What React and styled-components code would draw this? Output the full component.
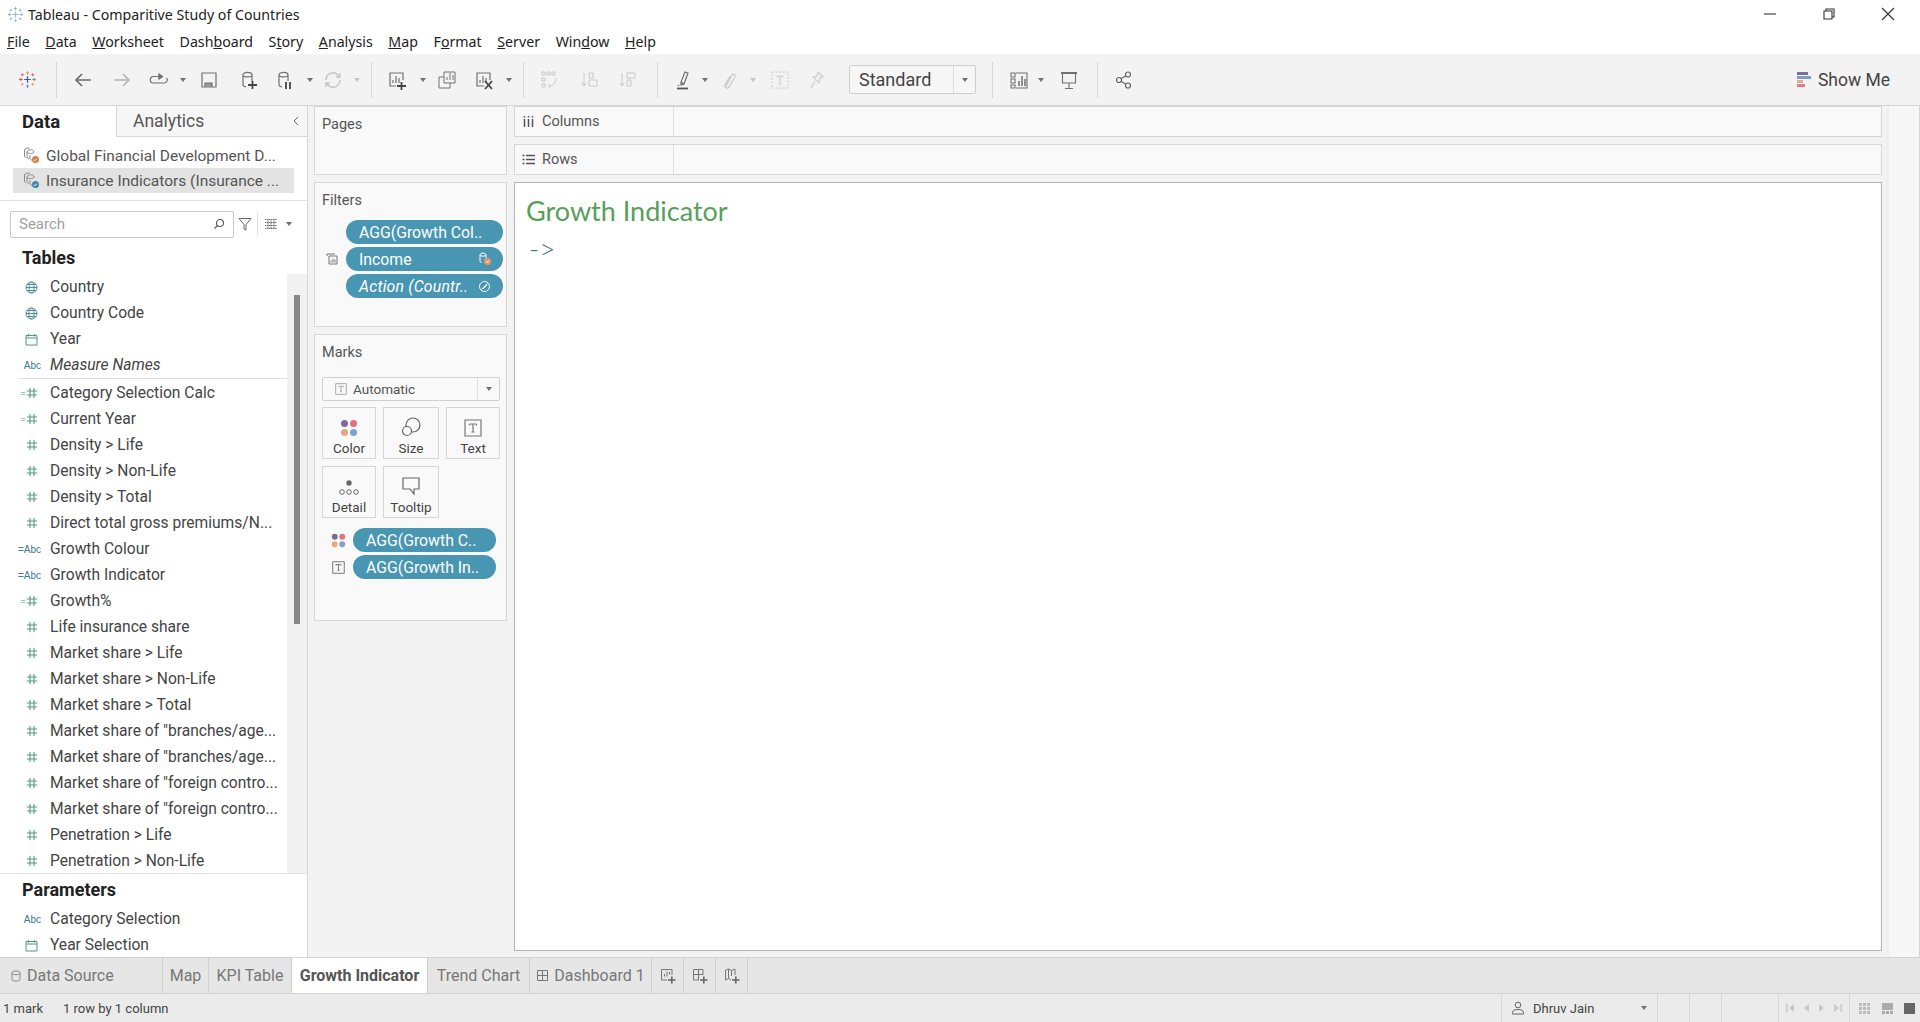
import React from "react";
import styled, { createGlobalStyle } from "styled-components";

const Global = createGlobalStyle`
  html, body { margin: 0; padding: 0; background: #fff; }
  * { box-sizing: border-box; }
`;

const Shell = styled.div`
  width: 1920px;
  height: 1022px;
  display: flex;
  flex-direction: column;
  overflow: hidden;
  font-family: Roboto, "Liberation Sans", sans-serif;
  color: #333;
`;

const TitleBar = styled.div`
  height: 27px;
  flex: none;
  display: flex;
  align-items: center;
  padding: 1px 0 0 7px;
  font-family: "Noto Sans", sans-serif;
  font-size: 14.2px;
  color: #222;
`;
const TitleText = styled.span`
  margin-left: 4px;
`;
const WindowBtns = styled.div`
  margin-left: auto;
  display: flex;
  align-items: center;
  gap: 45px;
  padding-right: 25px;
`;

const MenuBar = styled.div`
  height: 27px;
  flex: none;
  display: flex;
  align-items: center;
  gap: 15.6px;
  padding: 2px 0 0 7px;
  font-family: "Noto Sans", sans-serif;
  font-size: 14.2px;
  color: #222;
`;

const Toolbar = styled.div`
  height: 51px;
  flex: none;
  background: #f3f3f3;
  display: flex;
  align-items: center;
  padding-right: 30px;
`;
const Tool = styled.div`
  width: 20px;
  height: 20px;
  flex: none;
  margin-left: ${(p) => p.$ml}px;
  display: flex;
  align-items: center;
  justify-content: center;
`;
const Caret = styled.div`
  flex: none;
  width: 0;
  height: 0;
  margin-left: ${(p) => p.$ml || 0}px;
  border-left: 3.5px solid transparent;
  border-right: 3.5px solid transparent;
  border-top: 4px solid ${(p) => (p.$off ? "#c4c4c4" : "#707070")};
`;
const ToolSep = styled.div`
  flex: none;
  width: 1px;
  height: 36px;
  margin-left: ${(p) => p.$ml}px;
  background: #d8d8d8;
`;
const StandardBox = styled.div`
  flex: none;
  width: 127px;
  height: 29px;
  margin-left: ${(p) => p.$ml}px;
  display: flex;
  align-items: center;
  border: 1px solid #cfcfcf;
  border-radius: 2px;
  background: #f6f6f6;
  font-size: 18px;
  color: #444;
`;
const StandardText = styled.span`
  flex: 1;
  padding-left: 9px;
`;
const StandardArrow = styled.div`
  width: 22px;
  height: 100%;
  border-left: 1px solid #dcdcdc;
  display: flex;
  align-items: center;
  justify-content: center;
`;
const ShowMe = styled.div`
  margin-left: auto;
  display: flex;
  align-items: center;
  gap: 6px;
  font-size: 17.5px;
  color: #444;
`;

const Main = styled.div`
  flex: 1;
  min-height: 0;
  display: flex;
  background: #f3f3f3;
  border-top: 1px solid #d6d6d6;
`;

const DataPane = styled.div`
  width: 308px;
  flex: none;
  background: #fff;
  border-right: 1px solid #d6d6d6;
  display: flex;
  flex-direction: column;
  overflow: hidden;
`;
const PaneTabs = styled.div`
  height: 31px;
  flex: none;
  display: flex;
`;
const PaneTab = styled.div`
  width: ${(p) => (p.$active ? "116px" : "auto")};
  flex: ${(p) => (p.$active ? "none" : "1")};
  display: flex;
  align-items: center;
  justify-content: space-between;
  padding: 0 6px 0 ${(p) => (p.$active ? "22px" : "16px")};
  font-size: ${(p) => (p.$active ? "18.5px" : "17.5px")};
  font-weight: ${(p) => (p.$active ? 700 : 400)};
  color: ${(p) => (p.$active ? "#222" : "#555")};
  background: ${(p) => (p.$active ? "#fff" : "#f6f6f6")};
  border-left: ${(p) => (p.$active ? "none" : "1px solid #d6d6d6")};
  border-bottom: ${(p) => (p.$active ? "none" : "1px solid #d6d6d6")};
`;
const Sources = styled.div`
  flex: none;
  padding: 6px 13px 7px;
  border-bottom: 1px solid #e2e2e2;
`;
const SourceItem = styled.div`
  height: 25px;
  display: flex;
  align-items: center;
  gap: 6px;
  padding-left: 10px;
  font-size: 15.5px;
  color: #555;
  background: ${(p) => (p.$selected ? "#e3e3e3" : "transparent")};
`;
const SearchRow = styled.div`
  flex: none;
  display: flex;
  align-items: center;
  height: 26px;
  margin: 10px 0 0 10px;
`;
const SearchBox = styled.div`
  width: 224px;
  height: 27px;
  display: flex;
  align-items: center;
  justify-content: space-between;
  padding: 0 8px;
  border: 1px solid #c8c8c8;
  border-radius: 2px;
  font-size: 15px;
  color: #a0a0a0;
`;
const SearchTools = styled.div`
  display: flex;
  align-items: center;
  gap: 5px;
  margin-left: 4px;
`;
const SearchDivider = styled.div`
  width: 1px;
  height: 22px;
  background: #dcdcdc;
  margin-right: 1px;
`;
const SectionHead = styled.div`
  height: ${(p) => p.$h}px;
  flex: none;
  display: flex;
  align-items: flex-end;
  padding: 0 0 ${(p) => p.$pb}px 22px;
  font-size: 18px;
  font-weight: 700;
  color: #222;
`;
const FieldsArea = styled.div`
  height: 600px;
  flex: none;
  display: flex;
  border-bottom: 1px solid #e2e2e2;
`;
const FieldCol = styled.div`
  flex: 1;
  min-width: 0;
  overflow: hidden;
`;
const Divider = styled.div`
  height: 1px;
  margin: 0 0 1px 18px;
  background: #e0e0e0;
`;
const ScrollTrack = styled.div`
  width: 20px;
  flex: none;
  background: #f1f1f1;
  padding: 21px 0 0 7px;
`;
const ScrollThumb = styled.div`
  width: 6px;
  height: 329px;
  background: #888;
`;
const FieldRow = styled.div`
  height: 26px;
  flex: none;
  display: flex;
  align-items: center;
  font-size: 15.6px;
  font-style: ${(p) => (p.$italic ? "italic" : "normal")};
  color: #444;
  white-space: nowrap;
`;
const FieldIcon = styled.div`
  width: 50px;
  flex: none;
  padding-right: ${(p) => (p.$abc ? 9 : 12)}px;
  display: flex;
  align-items: center;
  justify-content: flex-end;
`;
const AbcMark = styled.span`
  font-family: "Liberation Sans", sans-serif;
  font-size: 10px;
  font-style: normal;
  color: #3f7a90;
`;
const CalcMark = styled.span`
  font-family: "Liberation Sans", sans-serif;
  font-size: 9px;
  color: #4f9a85;
  margin-right: 0.5px;
`;

const MiddleCol = styled.div`
  width: 193px;
  flex: none;
  margin-left: 6px;
  display: flex;
  flex-direction: column;
  gap: 7px;
`;
const Card = styled.div`
  height: ${(p) => p.$h}px;
  flex: none;
  background: #f9f9f9;
  border: 1px solid #d6d6d6;
  padding: 8px 7px 0;
`;
const CardTitle = styled.div`
  height: 20px;
  line-height: 20px;
  margin-bottom: ${(p) => p.$mb || 0}px;
  font-size: 14.5px;
  color: #555;
`;
const PillRow = styled.div`
  display: flex;
  align-items: center;
  margin: 0 0 3px -7px;
`;
const PillSlot = styled.div`
  width: ${(p) => p.$w}px;
  flex: none;
  display: flex;
  justify-content: center;
  padding-left: ${(p) => p.$pl || 0}px;
`;
const Pill = styled.div`
  width: ${(p) => p.$w}px;
  height: 24px;
  flex: none;
  border-radius: 12px;
  background: #4996b2;
  color: #fff;
  display: flex;
  align-items: center;
  justify-content: space-between;
  padding: 0 ${(p) => p.$pr || 8}px 0 13px;
  font-size: 15.8px;
  font-style: ${(p) => (p.$italic ? "italic" : "normal")};
  letter-spacing: ${(p) => (p.$italic ? "0.2px" : "0")};
  white-space: nowrap;
  overflow: hidden;
`;
const MarkSelect = styled.div`
  width: 178px;
  height: 24px;
  display: flex;
  align-items: center;
  border: 1px solid #d0d0d0;
  border-radius: 2px;
  font-size: 13.5px;
  color: #555;
`;
const MarkSelectLabel = styled.div`
  flex: 1;
  display: flex;
  align-items: center;
  gap: 6px;
  padding-left: 12px;
`;
const MarkSelectArrow = styled.div`
  width: 22px;
  height: 100%;
  border-left: 1px solid #e0e0e0;
  display: flex;
  align-items: center;
  justify-content: center;
`;
const MarkGrid = styled.div`
  display: grid;
  grid-template-columns: 54px 56px 54px;
  grid-auto-rows: 52px;
  gap: 7px;
  margin: 6px 0 10px;
`;
const MarkBtn = styled.div`
  border: 1px solid #d6d6d6;
  display: flex;
  flex-direction: column;
  align-items: center;
  justify-content: flex-end;
  gap: 3px;
  padding-bottom: 2px;
  font-size: 13.5px;
  color: #444;
`;

const ViewCol = styled.div`
  width: 1368px;
  flex: none;
  margin-left: 7px;
  display: flex;
  flex-direction: column;
  gap: 7px;
  padding-bottom: 6px;
`;
const Shelf = styled.div`
  height: 31px;
  flex: none;
  display: flex;
  background: #f9f9f9;
  border: 1px solid #d6d6d6;
`;
const ShelfLabel = styled.div`
  width: 159px;
  display: flex;
  align-items: center;
  gap: 7px;
  padding-left: 7px;
  border-right: 1px solid #dedede;
  font-size: 14.5px;
  color: #555;
`;
const ViewCard = styled.div`
  flex: 1;
  background: #fff;
  border: 1px solid #b4b4b4;
  padding: 12px 11px;
`;
const ViewTitle = styled.div`
  font-family: Lato, sans-serif;
  font-size: 27px;
  line-height: 32px;
  color: #57a05a;
`;
const ViewArrow = styled.div`
  font-family: Lato, sans-serif;
  font-size: 28px;
  font-weight: 300;
  line-height: 30px;
  margin-top: 6px;
  padding-left: 3px;
  color: #4a6f8f;
`;
const RightStrip = styled.div`
  flex: 1;
  margin-left: 7px;
  background: #f7f7f7;
  border-right: 1px solid #d6d6d6;
  box-shadow: -2px 0 3px rgba(0, 0, 0, 0.03);
`;

const TabBar = styled.div`
  height: 37px;
  flex: none;
  display: flex;
  background: #e6e6e6;
  border-top: 1px solid #d2d2d2;
  border-bottom: 1px solid #d2d2d2;
`;
const SheetTab = styled.div`
  width: ${(p) => p.$w}px;
  flex: none;
  display: flex;
  align-items: center;
  justify-content: ${(p) => (p.$left ? "flex-start" : "center")};
  gap: 5px;
  padding-left: ${(p) => (p.$left ? 10 : 0)}px;
  font-size: 16px;
  font-weight: ${(p) => (p.$active ? 700 : 400)};
  color: ${(p) => (p.$active ? "#555" : "#777")};
  background: ${(p) => (p.$active ? "#fff" : "transparent")};
  border-right: 1px solid #cecece;
  white-space: nowrap;
`;
const StatusBar = styled.div`
  height: 28px;
  flex: none;
  display: flex;
  align-items: center;
  background: #ebebeb;
  font-size: 13px;
  color: #444;
`;
const StatusText = styled.span`
  margin-left: ${(p) => p.$ml}px;
`;
const UserCell = styled.div`
  margin-left: auto;
  width: 157px;
  height: 100%;
  display: flex;
  align-items: center;
  gap: 8px;
  padding: 0 10px 0 9px;
  border-left: 1px solid #d6d6d6;
  border-right: 1px solid #d6d6d6;
`;
const EmptyCell = styled.div`
  width: ${(p) => p.$w}px;
  height: 100%;
  flex: none;
  display: flex;
  align-items: center;
  justify-content: ${(p) => p.$justify || "flex-start"};
  gap: ${(p) => p.$gap || 0}px;
  padding: 0 ${(p) => p.$pr || 0}px 0 ${(p) => p.$pl || 0}px;
  border-right: ${(p) => (p.$noBorder ? "none" : "1px solid #d6d6d6")};
`;
const UserName = styled.span`
  flex: 1;
`;

// ---- drawings

const Svg = ({ s = 20, vb = 20, c = "#707070", w = 1.2, children }) => (
  <svg width={s} height={s} viewBox={`0 0 ${vb} ${vb}`} fill="none" stroke={c} strokeWidth={w}>
    {children}
  </svg>
);

const Logo = ({ s = 20, pale }) => {
  const col = pale
    ? ["#7fa8c9", "#7fa8c9", "#9dbcd6", "#9dbcd6", "#8fb0cc"]
    : ["#e8964d", "#c9525f", "#6b97ab", "#3f5f8e", "#69979b"];
  return (
    <svg width={s} height={s} viewBox="0 0 20 20" fill="none" strokeWidth="1">
      <path d="M10 6.500v7M6.500 10h7" stroke={col[3]} strokeWidth="1.300" />
      <path d="M10 1v4M8.300 3h3.400" stroke={col[0]} />
      <path d="M10 15v4M8.300 17h3.400" stroke={col[2]} />
      <path d="M1 10h4M3 8.300v3.400" stroke={col[1]} />
      <path d="M15 10h4M17 8.300v3.400" stroke={col[4]} />
      <path d="M4.500 3.500v3M3 5h3M15.500 3.500v3M14 5h3" stroke={col[1]} strokeWidth=".9" />
      <path d="M4.500 13.500v3M3 15h3M15.500 13.500v3M14 15h3" stroke={col[0]} strokeWidth=".9" />
    </svg>
  );
};
const Back = () => (
  <Svg c="#6a6a6a" w={1.6}>
    <path d="M18 10H3M9 4l-6 6 6 6" />
  </Svg>
);
const Forward = () => (
  <Svg c="#b4b4b4" w={1.6}>
    <path d="M2 10h15M11 4l6 6-6 6" />
  </Svg>
);
const Redo = () => (
  <Svg>
    <path d="M10 6.500H4.500a3 3 0 0 0 0 6.500h11a3 3 0 0 0 2-5" />
    <path d="M10 4l3.500 2.500L10 9z" fill="#707070" />
  </Svg>
);
const Save = () => (
  <Svg>
    <path d="M3 3h14v14H3z" />
    <path d="M6 17v-4h7v4" fill="#999" />
  </Svg>
);
const Cyl = ({ badge }) => (
  <Svg>
    <path d="M5 5c0-3.500 9-3.500 9 0v6M5 5c0 2.500 9 2.500 9 0M5 5v10c0 1 1 1.500 3 1.800" />
    {badge === "plus" && <path d="M10 15h9M14.500 11v8" stroke="#444" strokeWidth="1.800" />}
    {badge === "pause" && <path d="M12 12v7M16 12v7" stroke="#444" strokeWidth="1.800" />}
  </Svg>
);
const Refresh = () => (
  <Svg c="#c4c4c4" w={1.4}>
    <path d="M3 10a7 7 0 0 1 12-5l2 2M17 10a7 7 0 0 1-12 5l-2-2" />
    <path d="M17 3v4h-4M3 17v-4h4" />
  </Svg>
);
const Bars = ({ x = 6, y = 5, c = "#707070" }) => (
  <path d={`M${x} ${y + 8}v-3M${x + 3} ${y + 8}v-7M${x + 6} ${y + 8}v-5`} stroke={c} />
);
const NewSheet = () => (
  <Svg>
    <path d="M9 16H3V3h13v7" />
    <Bars x={6} y={5} />
    <path d="M10 16h9M14.500 12v8" stroke="#444" strokeWidth="1.800" />
  </Svg>
);
const Duplicate = () => (
  <Svg w={1}>
    <path d="M7 2h11v11H7zM7 7H2v11h11v-5" />
    <Bars x={10} y={2} />
  </Svg>
);
const ClearSheet = () => (
  <Svg>
    <path d="M10 16H3V3h13v7" />
    <Bars x={6} y={5} />
    <path d="M11 11l7 8M18 11l-7 8" stroke="#444" strokeWidth="1.800" />
  </Svg>
);
const Swap = () => (
  <Svg c="#c8c8c8" w={1}>
    <path d="M3 2h3v3H3zM8 2h3v3H8zM13 2h3v3h-3zM3 8h3v3H3zM3 14h3v3H3z" />
    <path d="M17 8c0 4-2 7-6 8M9 14l2 2-1 2" />
  </Svg>
);
const SortA = () => (
  <Svg c="#c8c8c8" w={1}>
    <path d="M4 3v13M2 13l2 3 2-3M9 3h4v5H9zM9 10h8v6H9z" />
  </Svg>
);
const SortB = () => (
  <Svg c="#c8c8c8" w={1}>
    <path d="M4 3v13M2 13l2 3 2-3M9 3h8v5H9zM9 10h4v6H9z" />
  </Svg>
);
const Highlight = () => (
  <Svg c="#666" w={1.1}>
    <path d="M11 2l3 1-4 11-3 1 0-3zM7 12l3 2" />
    <path d="M3 18.500h11" stroke="#555" strokeWidth="1.800" />
    <path d="M4 16l1-1" />
  </Svg>
);
const Clip = () => (
  <Svg c="#c8c8c8" w={1.2}>
    <path d="M7 16l6-11c1-2 4 0 3 2l-6 10c-1 2-5 1-4-2l5-9" />
  </Svg>
);
const DashedT = () => (
  <Svg c="#c8c8c8" w={1}>
    <path d="M2 2h16v16H2z" strokeDasharray="2 1.500" />
    <path d="M7 6h6M10 6v8M8.500 14h3M7 6v1.500M13 6v1.500" />
  </Svg>
);
const Pin = () => (
  <Svg c="#c8c8c8" w={1.1}>
    <path d="M11 2l5 5-3 1-1 5-6-6 4-1zM8 11l-4 7" />
  </Svg>
);
const ChartType = () => (
  <Svg w={1.1}>
    <path d="M2 3h4v4H2zM2 9h4v4H2zM2 15h4v3H2zM7 3h11v15H7" />
    <path d="M10 16v-5M13 16V6M16 16V9" strokeWidth="1.500" />
  </Svg>
);
const Present = () => (
  <Svg w={1.1}>
    <path d="M2 3h16" strokeWidth="2" />
    <path d="M3.500 3v10h13V3M10 13v5M6 18.500h8" />
  </Svg>
);
const Share = () => (
  <Svg c="#666" w={1.2}>
    <circle cx="14" cy="4.500" r="2.500" />
    <circle cx="5" cy="10" r="2.500" />
    <circle cx="14" cy="15.500" r="2.500" />
    <path d="M7 8.800l5-3M7 11.200l5 3" />
  </Svg>
);
const ShowMeIcon = () => (
  <svg width="15" height="16" viewBox="0 0 15 16">
    <rect y="0" width="11" height="3" fill="#7b6f95" />
    <rect y="4" width="14" height="3" fill="#7a9cc6" />
    <rect y="8" width="6" height="3" fill="#e8a98e" />
    <rect y="12" width="8" height="3" fill="#dc7f86" />
  </svg>
);
const SourceIcon = ({ dot }) => (
  <svg width="17" height="17" viewBox="0 0 17 17" fill="none" stroke="#8a8a8a" strokeWidth="1">
    <path d="M4 5c0-3 7-3 7 0M4 5v5c0 1 1 1.500 2 1.700M4 5c0 2 7 2 7 0" />
    <path d="M1.500 3v6c0 1 .6 1.500 1.500 1.700M1.500 3c0-1.500 3-2.200 5-1.800" />
    <path d="M7 8v3.500c0 1 1 1.500 2 1.700" />
    <circle cx="12.500" cy="12.500" r="3.500" fill={dot} stroke="none" />
    <path d="M10.800 12.500l1.200 1.200 2-2" stroke="#fff" />
  </svg>
);
const Globe = () => (
  <Svg s={13} vb={13} c="#4f8c9c" w={1}>
    <circle cx="6.500" cy="6.500" r="5.500" />
    <ellipse cx="6.500" cy="6.500" rx="2.600" ry="5.500" />
    <path d="M1 6.500h11M2 3.500h9M2 9.500h9" />
  </Svg>
);
const Calendar = () => (
  <Svg s={13} vb={13} c="#4f9a85" w={1}>
    <path d="M1 2.500h11v9.500H1zM1 5h11M3.500 1v2.500M9.500 1v2.500" />
  </Svg>
);
const Hash = () => (
  <Svg s={12} vb={12} c="#4f9a85" w={1.1}>
    <path d="M4 1v10M8 1v10M1 4h10M1 8h10" />
  </Svg>
);
const Funnel = () => (
  <Svg s={14} vb={14} c="#666" w={1}>
    <path d="M1 1.500h12L8 7.500V13l-2-1V7.500z" />
  </Svg>
);
const ListIcon = () => (
  <Svg s={14} vb={14} c="#777" w={1}>
    <path d="M1 2.500h12M1 5.500h12M1 8.500h12M1 11.500h12M4 2v10M7 2v10M10 2v10" strokeDasharray="1.500 .5" />
  </Svg>
);
const Magnifier = () => (
  <Svg s={12} vb={12} c="#555" w={1.1}>
    <circle cx="7" cy="5" r="3.500" />
    <path d="M4.500 7.500L1.500 10.500" />
  </Svg>
);
const ColorDots = ({ s = 18 }) => (
  <svg width={s} height={s} viewBox="0 0 18 18">
    <circle cx="4.500" cy="4.500" r="3.500" fill="#7b6a9c" />
    <circle cx="13.500" cy="4.500" r="3.500" fill="#e4707f" />
    <circle cx="4.500" cy="13.500" r="3.500" fill="#e8a680" />
    <circle cx="13.500" cy="13.500" r="3.500" fill="#80a3cc" />
  </svg>
);
const TBox = ({ s = 18, c = "#777" }) => (
  <Svg s={s} vb={18} c={c} w={1.2}>
    <path d="M1 1h16v16H1z" />
    <path d="M5.500 5h7M9 5v8M7.500 13h3M5.500 5v1.500M12.500 5v1.500" />
  </Svg>
);
const SizeIcon = () => (
  <Svg s={20} vb={20} c="#666" w={1.2}>
    <circle cx="12" cy="8" r="7" />
    <circle cx="6" cy="14" r="4.500" fill="#f9f9f9" />
  </Svg>
);
const DetailIcon = () => (
  <svg width="20" height="16" viewBox="0 0 20 16" fill="none" stroke="#666">
    <circle cx="10" cy="3" r="2.700" fill="#666" stroke="none" />
    <circle cx="3" cy="12" r="2.300" />
    <circle cx="10" cy="12" r="2.300" />
    <circle cx="17" cy="12" r="2.300" />
  </svg>
);
const TooltipIcon = () => (
  <Svg s={20} vb={20} c="#666" w={1.2}>
    <path d="M2 2h16v11h-5v5l-4-5H2z" />
  </Svg>
);
const ColumnsIcon = () => (
  <Svg s={13} vb={13} c="#555" w={1.5}>
    <path d="M2.500 4v8M6.500 4v8M10.500 4v8M2.500 1v1.500M6.500 1v1.500M10.500 1v1.500" />
  </Svg>
);
const RowsIcon = () => (
  <Svg s={13} vb={13} c="#555" w={1.4}>
    <path d="M4 2.500h9M4 6.500h9M4 10.500h9M.5 2.500h2M.5 6.500h2M.5 10.500h2" />
  </Svg>
);
const SetIcon = () => (
  <Svg s={12} vb={12} c="#777" w={1}>
    <path d="M1 3V1h8M3 3h8v8H3zM5 9.500v-2M7 9.500v-4M9 9.500v-3" />
  </Svg>
);
const IncomeBadge = () => (
  <svg width="14" height="14" viewBox="0 0 14 14" fill="none" stroke="#fff" strokeWidth="1">
    <path d="M2 3c0-2.500 6-2.500 6 0v4M2 3c0 1.500 6 1.500 6 0M2 3v6c0 1 1 1.500 2 1.500" />
    <circle cx="9.500" cy="9.500" r="3.500" fill="#e8965f" stroke="none" />
    <path d="M8 9.500l1 1 2-2" />
  </svg>
);
const LinkBadge = () => (
  <Svg s={13} vb={13} c="#fff" w={1}>
    <circle cx="6.500" cy="6.500" r="5" />
    <path d="M3.500 9.500l6-6M5 9l4-4" />
  </Svg>
);
const DbSmall = () => (
  <Svg s={12} vb={12} c="#888" w={1}>
    <path d="M2 2.500c0-2 8-2 8 0v7c0 2-8 2-8 0zM2 3.500c0 1.500 8 1.500 8 0" />
  </Svg>
);
const Grid2 = () => (
  <Svg s={13} vb={13} c="#777" w={1}>
    <path d="M1.500 1.500h10v10h-10zM6.500 1.500v10M1.500 6.500h10" />
  </Svg>
);
const AddTab = ({ kind }) => (
  <Svg s={16} vb={16} c="#777" w={1}>
    {kind === "sheet" && <path d="M7 12H1.500V1.500H12V7M4.500 8.500V6M7 8.500v-5M9.500 6.500V4" />}
    {kind === "dash" && <path d="M7 12H1.500V1.500H11V7M6.500 1.500V12M1.500 6.500H11" />}
    {kind === "story" && <path d="M7 12l-2.500-1.500L1.500 12V2l3-1 3 1.500L11 1v6M4.500 1v9.500M7.500 2.500V8" />}
    <path d="M8 12h7.500M11.800 8.500v7" stroke="#666" strokeWidth="1.600" />
  </Svg>
);
const UserIcon = () => (
  <Svg s={14} vb={14} c="#666" w={1}>
    <circle cx="7" cy="4" r="2.800" />
    <path d="M1.500 13v-1.500c0-2 2-3 5.500-3s5.500 1 5.500 3V13z" />
  </Svg>
);
const Pager = ({ d }) => (
  <svg width="10" height="10" viewBox="0 0 10 10" fill="#c8c8c8">
    <path d={d} />
  </svg>
);
const ViewDots = ({ level }) => {
  if (level === 3) return <svg width="11" height="11" viewBox="0 0 11 11"><rect width="11" height="11" fill="#666" /></svg>;
  if (level === 2) {
    return (
      <svg width="11" height="11" viewBox="0 0 11 11" fill="#aaa">
        <rect width="11" height="7" />
        <path d="M0 8h3v3H0zM4 8h3v3H4zM8 8h3v3H8z" />
      </svg>
    );
  }
  return (
    <svg width="11" height="11" viewBox="0 0 11 11" fill="#bbb">
      {[0, 4, 8].flatMap((y) => [0, 4, 8].map((x) => <rect key={x + "-" + y} x={x} y={y} width="3" height="3" />))}
    </svg>
  );
};

// ---- data

const menus = [
  ["F", "ile"], ["D", "ata"], ["W", "orksheet"], ["Dash", "b", "oard"], ["S", "t", "ory"], ["A", "nalysis"],
  ["M", "ap"], ["F", "o", "rmat"], ["S", "erver"], ["Win", "d", "ow"], ["H", "elp"],
];

const topFields = [
  { name: "Country", type: "globe" },
  { name: "Country Code", type: "globe" },
  { name: "Year", type: "date" },
  { name: "Measure Names", type: "abc", italic: true },
];
const measures = [
  { name: "Category Selection Calc", type: "calc" },
  { name: "Current Year", type: "calc" },
  { name: "Density > Life", type: "num" },
  { name: "Density > Non-Life", type: "num" },
  { name: "Density > Total", type: "num" },
  { name: "Direct total gross premiums/N...", type: "num" },
  { name: "Growth Colour", type: "calcAbc" },
  { name: "Growth Indicator", type: "calcAbc" },
  { name: "Growth%", type: "calc" },
  { name: "Life insurance share", type: "num" },
  { name: "Market share > Life", type: "num" },
  { name: "Market share > Non-Life", type: "num" },
  { name: "Market share > Total", type: "num" },
  { name: 'Market share of "branches/age...', type: "num" },
  { name: 'Market share of "branches/age...', type: "num" },
  { name: 'Market share of "foreign contro...', type: "num" },
  { name: 'Market share of "foreign contro...', type: "num" },
  { name: "Penetration > Life", type: "num" },
  { name: "Penetration > Non-Life", type: "num" },
];

const Field = ({ name, type, italic }) => (
  <FieldRow $italic={italic}>
    <FieldIcon $abc={type === "abc" || type === "calcAbc"}>
      {type === "globe" && <Globe />}
      {type === "date" && <Calendar />}
      {type === "abc" && <AbcMark>Abc</AbcMark>}
      {type === "calcAbc" && <AbcMark>=Abc</AbcMark>}
      {type === "calc" && <CalcMark>=</CalcMark>}
      {(type === "num" || type === "calc") && <Hash />}
    </FieldIcon>
    {name}
  </FieldRow>
);

export default function App() {
  return (
    <Shell>
      <Global />
      <TitleBar>
        <Logo s={17} pale />
        <TitleText>Tableau - Comparitive Study of Countries</TitleText>
        <WindowBtns>
          <Svg s={14} vb={14} c="#333" w={1.1}><path d="M1 7h12" /></Svg>
          <Svg s={14} vb={14} c="#333" w={1.1}><path d="M2 4h8v8H2zM4 4V2h8v8h-2" /></Svg>
          <Svg s={14} vb={14} c="#333" w={1.1}><path d="M1 1l12 12M13 1L1 13" /></Svg>
        </WindowBtns>
      </TitleBar>

      <MenuBar>
        {menus.map((m, i) => (
          <span key={i}>
            {m.length === 2 ? <><u>{m[0]}</u>{m[1]}</> : <>{m[0]}<u>{m[1]}</u>{m[2]}</>}
          </span>
        ))}
      </MenuBar>

      <Toolbar>
        <Tool $ml={17}><Logo s={19} /></Tool>
        <ToolSep $ml={19} />
        <Tool $ml={16}><Back /></Tool>
        <Tool $ml={19}><Forward /></Tool>
        <Tool $ml={17}><Redo /></Tool>
        <Caret $ml={11} />
        <Tool $ml={13}><Save /></Tool>
        <Tool $ml={19}><Cyl badge="plus" /></Tool>
        <Tool $ml={16}><Cyl badge="pause" /></Tool>
        <Caret $ml={13} />
        <Tool $ml={10}><Refresh /></Tool>
        <Caret $ml={11} $off />
        <ToolSep $ml={11} />
        <Tool $ml={15}><NewSheet /></Tool>
        <Caret $ml={13} />
        <Tool $ml={11}><Duplicate /></Tool>
        <Tool $ml={17}><ClearSheet /></Tool>
        <Caret $ml={12} />
        <ToolSep $ml={11} />
        <Tool $ml={15}><Swap /></Tool>
        <Tool $ml={21}><SortA /></Tool>
        <Tool $ml={18}><SortB /></Tool>
        <ToolSep $ml={19} />
        <Tool $ml={16}><Highlight /></Tool>
        <Caret $ml={8} />
        <Tool $ml={11}><Clip /></Tool>
        <Caret $ml={11} $off />
        <Tool $ml={14}><DashedT /></Tool>
        <Tool $ml={17}><Pin /></Tool>
        <StandardBox $ml={22}>
          <StandardText>Standard</StandardText>
          <StandardArrow><Caret /></StandardArrow>
        </StandardBox>
        <ToolSep $ml={16} />
        <Tool $ml={16}><ChartType /></Tool>
        <Caret $ml={9} />
        <Tool $ml={15}><Present /></Tool>
        <ToolSep $ml={18} />
        <Tool $ml={16}><Share /></Tool>
        <ShowMe>
          <ShowMeIcon />
          Show Me
        </ShowMe>
      </Toolbar>

      <Main>
        <DataPane>
          <PaneTabs>
            <PaneTab $active>Data</PaneTab>
            <PaneTab>
              Analytics
              <Svg s={10} vb={10} c="#666" w={1}><path d="M7 1L3 5l4 4" /></Svg>
            </PaneTab>
          </PaneTabs>
          <Sources>
            <SourceItem><SourceIcon dot="#d9794a" />Global Financial Development D...</SourceItem>
            <SourceItem $selected><SourceIcon dot="#3f87a8" />Insurance Indicators (Insurance ...</SourceItem>
          </Sources>
          <SearchRow>
            <SearchBox>Search<Magnifier /></SearchBox>
            <SearchTools>
              <Funnel />
              <SearchDivider />
              <ListIcon />
              <Caret $ml={3} />
            </SearchTools>
          </SearchRow>
          <SectionHead $h={37} $pb={6}>Tables</SectionHead>
          <FieldsArea>
            <FieldCol>
              {topFields.map((f) => <Field key={f.name} {...f} />)}
              <Divider />
              {measures.map((f, i) => <Field key={i} {...f} />)}
            </FieldCol>
            <ScrollTrack><ScrollThumb /></ScrollTrack>
          </FieldsArea>
          <SectionHead $h={32} $pb={6}>Parameters</SectionHead>
          <Field name="Category Selection" type="abc" />
          <Field name="Year Selection" type="date" />
        </DataPane>

        <MiddleCol>
          <Card $h={69}>
            <CardTitle>Pages</CardTitle>
          </Card>
          <Card $h={145}>
            <CardTitle $mb={9}>Filters</CardTitle>
            <PillRow><PillSlot $w={31} /><Pill $w={157}>AGG(Growth Col..</Pill></PillRow>
            <PillRow>
              <PillSlot $w={31} $pl={2}><SetIcon /></PillSlot>
              <Pill $w={157} $pr={11}>Income<IncomeBadge /></Pill>
            </PillRow>
            <PillRow>
              <PillSlot $w={31} />
              <Pill $w={157} $pr={12} $italic>Action (Countr..<LinkBadge /></Pill>
            </PillRow>
          </Card>
          <Card $h={287}>
            <CardTitle $mb={14}>Marks</CardTitle>
            <MarkSelect>
              <MarkSelectLabel><TBox s={12} c="#999" />Automatic</MarkSelectLabel>
              <MarkSelectArrow><Caret /></MarkSelectArrow>
            </MarkSelect>
            <MarkGrid>
              <MarkBtn><ColorDots />Color</MarkBtn>
              <MarkBtn><SizeIcon />Size</MarkBtn>
              <MarkBtn><TBox />Text</MarkBtn>
              <MarkBtn><DetailIcon />Detail</MarkBtn>
              <MarkBtn><TooltipIcon />Tooltip</MarkBtn>
            </MarkGrid>
            <PillRow>
              <PillSlot $w={38} $pl={8}><ColorDots s={15} /></PillSlot>
              <Pill $w={143}>AGG(Growth C..</Pill>
            </PillRow>
            <PillRow>
              <PillSlot $w={38} $pl={8}><TBox s={13} c="#666" /></PillSlot>
              <Pill $w={143}>AGG(Growth In..</Pill>
            </PillRow>
          </Card>
        </MiddleCol>

        <ViewCol>
          <Shelf><ShelfLabel><ColumnsIcon />Columns</ShelfLabel></Shelf>
          <Shelf><ShelfLabel><RowsIcon />Rows</ShelfLabel></Shelf>
          <ViewCard>
            <ViewTitle>Growth Indicator</ViewTitle>
            <ViewArrow>-&gt;</ViewArrow>
          </ViewCard>
        </ViewCol>
        <RightStrip />
      </Main>

      <TabBar>
        <SheetTab $w={163} $left><DbSmall />Data Source</SheetTab>
        <SheetTab $w={46}>Map</SheetTab>
        <SheetTab $w={83}>KPI Table</SheetTab>
        <SheetTab $w={136} $active>Growth Indicator</SheetTab>
        <SheetTab $w={102}>Trend Chart</SheetTab>
        <SheetTab $w={122}><Grid2 />Dashboard 1</SheetTab>
        <SheetTab $w={32}><AddTab kind="sheet" /></SheetTab>
        <SheetTab $w={32}><AddTab kind="dash" /></SheetTab>
        <SheetTab $w={32}><AddTab kind="story" /></SheetTab>
      </TabBar>

      <StatusBar>
        <StatusText $ml={3}>1 mark</StatusText>
        <StatusText $ml={20}>1 row by 1 column</StatusText>
        <UserCell>
          <UserIcon />
          <UserName>Dhruv Jain</UserName>
          <Caret />
        </UserCell>
        <EmptyCell $w={32} />
        <EmptyCell $w={32} />
        <EmptyCell $w={57} />
        <EmptyCell $w={71} $justify="center" $gap={6}>
          <Pager d="M1 1h1.500v8H1zM9 1v8L4 5z" />
          <Pager d="M8 1v8L3 5z" />
          <Pager d="M2 1v8l5-4z" />
          <Pager d="M1 1v8l5-4zM7.500 1H9v8H7.500z" />
        </EmptyCell>
        <EmptyCell $w={70} $noBorder $justify="space-between" $pl={9} $pr={5}>
          <ViewDots level={1} />
          <ViewDots level={2} />
          <ViewDots level={3} />
        </EmptyCell>
      </StatusBar>
    </Shell>
  );
}
